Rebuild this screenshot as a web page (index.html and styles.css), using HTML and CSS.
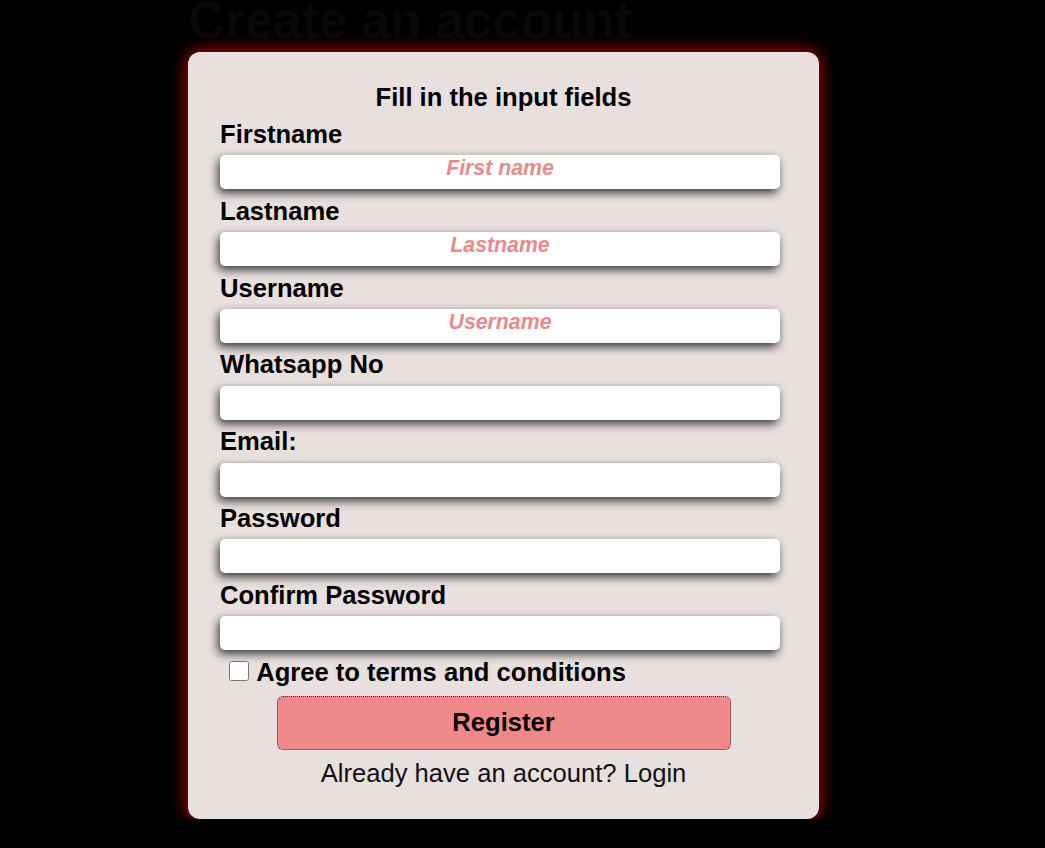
FILE: index.html
```html
<!DOCTYPE html>
<html lang="en">
<head>
<meta charset="utf-8">
<title>Create an account</title>
<link rel="stylesheet" href="styles.css">
</head>
<body>
<div class="page">
  <h1 class="title">Create an account</h1>
  <form class="card">
    <h3 class="card-title">Fill in the input fields</h3>
    <div class="field">
      <label class="label" for="fn">Firstname</label>
      <input class="input" id="fn" type="text" placeholder="First name">
    </div>
    <div class="field">
      <label class="label" for="ln">Lastname</label>
      <input class="input" id="ln" type="text" placeholder="Lastname">
    </div>
    <div class="field">
      <label class="label" for="un">Username</label>
      <input class="input" id="un" type="text" placeholder="Username">
    </div>
    <div class="field">
      <label class="label" for="wa">Whatsapp No</label>
      <input class="input" id="wa" type="text">
    </div>
    <div class="field">
      <label class="label" for="em">Email:</label>
      <input class="input" id="em" type="email">
    </div>
    <div class="field">
      <label class="label" for="pw">Password</label>
      <input class="input" id="pw" type="password">
    </div>
    <div class="field">
      <label class="label" for="cpw">Confirm Password</label>
      <input class="input" id="cpw" type="password">
    </div>
    <label class="agree"><input class="check" type="checkbox"> Agree to terms and conditions</label>
    <button class="register" type="button">Register</button>
    <p class="login">Already have an account? Login</p>
  </form>
</div>
</body>
</html>
```

FILE: styles.css
```css
html, body {
  margin: 0;
  padding: 0;
  background: #000;
}

body {
  font-family: "Liberation Sans", Arial, sans-serif;
  color: #000;
}

.page {
  display: flex;
  flex-direction: column;
  width: 631px;
  margin-left: 188px;
}

.title {
  margin: -9px 0 2px 0;
  font-size: 51.2px;
  font-weight: bold;
  color: #080808;
}

.card {
  box-sizing: border-box;
  width: 631px;
  padding: 30.6px 32px 31px 32px;
  background: #e8dfdf;
  border-radius: 12px;
  box-shadow: 0 0 17px #d80000;
}

.card-title {
  margin: 0 0 7.9px 0;
  font-size: 25.6px;
  line-height: 29.5px;
  font-weight: bold;
  text-align: center;
}

.field {
  display: flex;
  flex-direction: column;
}

.label {
  display: block;
  font-size: 25.6px;
  line-height: 29.5px;
  font-weight: bold;
}

.input {
  box-sizing: border-box;
  display: block;
  width: 560px;
  height: 34px;
  margin: 6px 0 7.3px 0;
  padding: 1px 0 9px 0;
  border: none;
  border-radius: 5px;
  background: #fff;
  box-shadow: -2px 4px 10px rgba(0, 0, 0, 0.75);
  font-family: "Liberation Sans", Arial, sans-serif;
  font-size: 21.3px;
  font-weight: bold;
  font-style: italic;
  text-align: center;
  outline: none;
}

.input::placeholder {
  color: #e98a8a;
  opacity: 1;
}

.agree {
  display: block;
  font-size: 25.6px;
  line-height: 29.5px;
  font-weight: bold;
}

.check {
  width: 20px;
  height: 20px;
  margin: 0 1px 0 9px;
  vertical-align: baseline;
}

.register {
  display: block;
  box-sizing: border-box;
  width: 454px;
  margin: 9px auto 0 auto;
  padding: 10px;
  border: 1px dotted #333;
  border-radius: 6px;
  background: #f08a8a;
  font-family: "Liberation Sans", Arial, sans-serif;
  font-size: 25.6px;
  font-weight: bold;
  line-height: 31.5px;
  color: #000;
}

.login {
  margin: 9px 0 0 0;
  font-size: 25.6px;
  line-height: 29.5px;
  text-align: center;
  color: #111;
}
```
